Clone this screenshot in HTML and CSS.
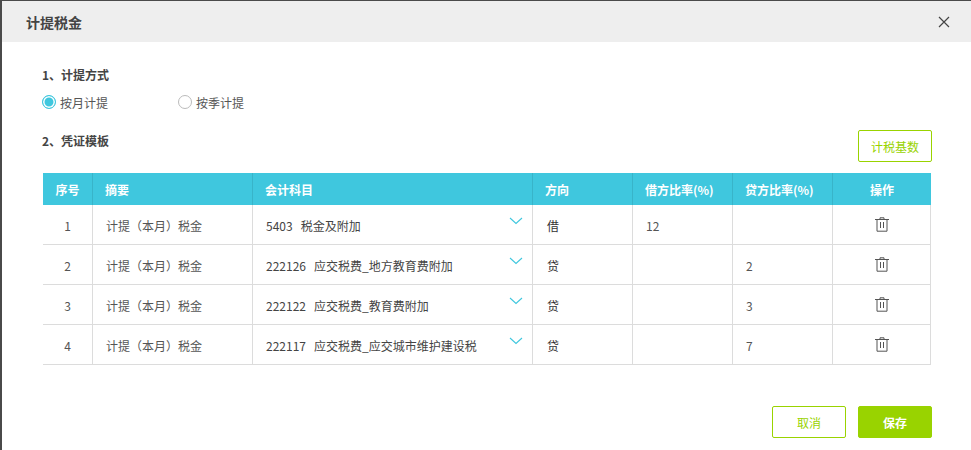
FILE: index.html
```html
<!DOCTYPE html>
<html lang="zh-CN">
<head>
    <meta charset="UTF-8">
    <title>计提税金</title>
    <link rel="stylesheet" href="styles.css">
</head>
<body>
    <div class="dialog">
        <div class="dialog-header">
            <span class="dialog-title">计提税金</span>
            <svg class="close-icon" width="12" height="12" viewBox="0 0 12 12"><path d="M1 1l10 10M11 1L1 11" stroke="#444" stroke-width="1.2" fill="none"/></svg>
        </div>
        <div class="dialog-body">
            <div class="section-title">1、计提方式</div>
            <div class="radio-row">
                <label class="radio-item"><span class="radio checked"></span>按月计提</label>
                <label class="radio-item"><span class="radio"></span>按季计提</label>
            </div>
            <div class="template-row">
                <div class="section-title">2、凭证模板</div>
                <button class="btn btn-outline">计税基数</button>
            </div>
            <table class="voucher-table">
                <colgroup>
                    <col class="col-no"><col class="col-summary"><col class="col-account"><col class="col-dir"><col class="col-rate"><col class="col-rate"><col class="col-op">
                </colgroup>
                <thead>
                    <tr>
                        <th class="center">序号</th>
                        <th>摘要</th>
                        <th>会计科目</th>
                        <th>方向</th>
                        <th>借方比率(%)</th>
                        <th>贷方比率(%)</th>
                        <th class="center">操作</th>
                    </tr>
                </thead>
                <tbody>
                    <tr>
                        <td class="center">1</td>
                        <td>计提（本月）税金</td>
                        <td class="account">5403&nbsp;&nbsp; 税金及附加<svg class="chevron" width="14" height="8" viewBox="0 0 14 8"><path d="M1 1l6 5.5L13 1" stroke="#3fc7de" stroke-width="1.1" fill="none"/></svg></td>
                        <td class="dark">借</td>
                        <td>12</td>
                        <td></td>
                        <td class="center"><svg class="trash" width="14" height="15" viewBox="0 0 14 15"><path d="M0 2.5h14M5 2.5V.8h4v1.7M2 2.5v11.7h10V2.5M5.5 5v6M8.5 5v6" stroke="#555" stroke-width="1" fill="none"/></svg></td>
                    </tr>
                    <tr>
                        <td class="center">2</td>
                        <td>计提（本月）税金</td>
                        <td class="account">222126&nbsp;&nbsp; 应交税费_地方教育费附加<svg class="chevron" width="14" height="8" viewBox="0 0 14 8"><path d="M1 1l6 5.5L13 1" stroke="#3fc7de" stroke-width="1.1" fill="none"/></svg></td>
                        <td class="dark">贷</td>
                        <td></td>
                        <td>2</td>
                        <td class="center"><svg class="trash" width="14" height="15" viewBox="0 0 14 15"><path d="M0 2.5h14M5 2.5V.8h4v1.7M2 2.5v11.7h10V2.5M5.5 5v6M8.5 5v6" stroke="#555" stroke-width="1" fill="none"/></svg></td>
                    </tr>
                    <tr>
                        <td class="center">3</td>
                        <td>计提（本月）税金</td>
                        <td class="account">222122&nbsp;&nbsp; 应交税费_教育费附加<svg class="chevron" width="14" height="8" viewBox="0 0 14 8"><path d="M1 1l6 5.5L13 1" stroke="#3fc7de" stroke-width="1.1" fill="none"/></svg></td>
                        <td class="dark">贷</td>
                        <td></td>
                        <td>3</td>
                        <td class="center"><svg class="trash" width="14" height="15" viewBox="0 0 14 15"><path d="M0 2.5h14M5 2.5V.8h4v1.7M2 2.5v11.7h10V2.5M5.5 5v6M8.5 5v6" stroke="#555" stroke-width="1" fill="none"/></svg></td>
                    </tr>
                    <tr>
                        <td class="center">4</td>
                        <td>计提（本月）税金</td>
                        <td class="account">222117&nbsp;&nbsp; 应交税费_应交城市维护建设税<svg class="chevron" width="14" height="8" viewBox="0 0 14 8"><path d="M1 1l6 5.5L13 1" stroke="#3fc7de" stroke-width="1.1" fill="none"/></svg></td>
                        <td class="dark">贷</td>
                        <td></td>
                        <td>7</td>
                        <td class="center"><svg class="trash" width="14" height="15" viewBox="0 0 14 15"><path d="M0 2.5h14M5 2.5V.8h4v1.7M2 2.5v11.7h10V2.5M5.5 5v6M8.5 5v6" stroke="#555" stroke-width="1" fill="none"/></svg></td>
                    </tr>
                </tbody>
            </table>
            <div class="dialog-footer">
                <button class="btn btn-outline">取消</button>
                <button class="btn btn-primary">保存</button>
            </div>
        </div>
    </div>
</body>
</html>
```

FILE: styles.css
```css
html, body {
    height: 100%;
}
body {
    margin: 0;
    padding: 1px 0 0 2px;
    box-sizing: border-box;
    overflow: hidden;
    background: #4a4a4a;
    font-family: "Noto Sans CJK SC", "Noto Sans", sans-serif;
    font-size: 12px;
    color: #555;
}
.dialog {
    background: white;
    height: 100%;
}
.dialog-header {
    display: flex;
    align-items: center;
    justify-content: space-between;
    height: 41px;
    padding: 0 21px 0 24px;
    background: #eeeeee;
}
.dialog-title {
    font-size: 14px;
    font-weight: 700;
    color: #444;
}
.close-icon {
    display: block;
    margin-top: 1px;
}
.dialog-body {
    padding: 24px 39px 0 41px;
}
.section-title {
    margin-left: -1px;
    font-weight: 700;
    color: #444;
    line-height: 18px;
}
.radio-row {
    display: flex;
    margin: 9px 0 0 -1px;
}
.radio-item {
    display: flex;
    align-items: center;
    width: 136px;
    height: 18px;
    color: #555;
}
.radio {
    box-sizing: border-box;
    width: 14px;
    height: 14px;
    margin-right: 4px;
    border: 1px solid #bbb;
    border-radius: 50%;
}
.radio.checked {
    border-color: #3fc7de;
    background: #3fc7de;
    box-shadow: inset 0 0 0 1.5px white;
}
.template-row {
    display: flex;
    justify-content: space-between;
    align-items: flex-start;
    height: 32px;
    margin-top: 21px;
}
.template-row .btn {
    margin-top: -2px;
}
.btn {
    box-sizing: border-box;
    width: 74px;
    height: 32px;
    padding: 0;
    border: 1px solid #99d300;
    border-radius: 2px;
    background: white;
    color: #99d300;
    font: inherit;
    cursor: pointer;
}
.btn-primary {
    background: #99d300;
    color: white;
    font-weight: 700;
}
.voucher-table {
    width: 888px;
    margin-top: 9px;
    border-collapse: separate;
    border-spacing: 0;
    table-layout: fixed;
}
.col-no { width: 50px; }
.col-summary { width: 160px; }
.col-account { width: 280px; }
.col-dir, .col-rate { width: 100px; }
.col-op { width: 98px; }
th {
    box-sizing: border-box;
    height: 32px;
    padding: 0 12px;
    background: #3fc7de;
    border-right: 1px solid #38b4c9;
    color: white;
    font-weight: 700;
    text-align: left;
}
th:last-child {
    border-right: none;
}
td {
    height: 40px;
    padding: 2px 13px 0;
    box-sizing: border-box;
    border-right: 1px solid #dcdcdc;
    border-bottom: 1px solid #dcdcdc;
}
.center {
    text-align: center;
    padding-left: 0;
    padding-right: 0;
}
.account {
    position: relative;
    color: #444;
}
.dark {
    padding-left: 14px;
    color: #333;
}
.chevron {
    position: absolute;
    top: 12px;
    right: 9px;
}
.trash {
    display: block;
    margin: -2px auto 0;
}
.dialog-footer {
    display: flex;
    justify-content: flex-end;
    gap: 12px;
    margin-top: 41px;
}
```
